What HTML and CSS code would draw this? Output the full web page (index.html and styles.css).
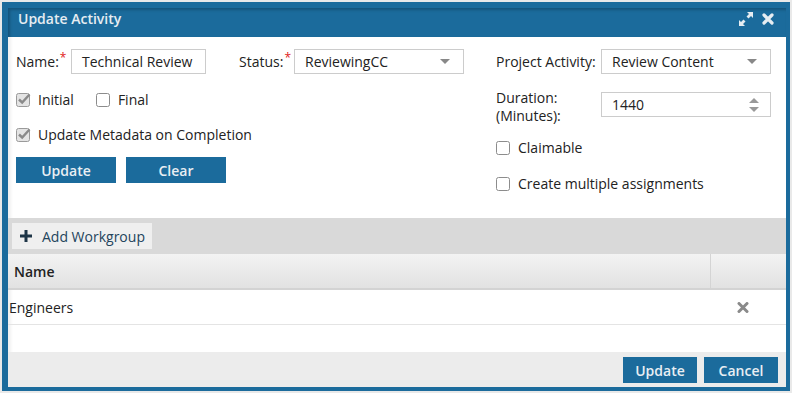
FILE: index.html
```html
<!DOCTYPE html>
<html lang="en">
<head>
    <meta charset="UTF-8">
    <title>Update Activity</title>
    <link rel="stylesheet" href="styles.css">
</head>
<body>
    <div class="dialog">
        <div class="title-bar">
            <span class="title">Update Activity</span>
            <div class="title-icons">
                <svg class="icon-max" width="14" height="14" viewBox="0 0 14 14">
                    <polygon points="14,0 14,6 12,4 9.5,6.5 7.5,4.5 10,2 8,0" fill="#e6edf2"/>
                    <polygon points="0,14 0,8 2,10 4.5,7.5 6.5,9.5 4,12 6,14" fill="#e6edf2"/>
                </svg>
                <svg class="icon-close" width="12" height="12" viewBox="0 0 12 12">
                    <path d="M2 2 L10 10 M10 2 L2 10" stroke="#e6edf2" stroke-width="3.2" stroke-linecap="round"/>
                </svg>
            </div>
        </div>

        <div class="form">
            <div class="col-left">
                <div class="row">
                    <label class="lbl lbl-name">Name:<span class="req">*</span></label>
                    <div class="field field-name">Technical Review</div>
                    <label class="lbl lbl-status">Status:<span class="req">*</span></label>
                    <div class="field field-select">
                        <span>ReviewingCC</span>
                        <svg width="10" height="5" viewBox="0 0 10 5"><polygon points="0,0 10,0 5,5" fill="#888"/></svg>
                    </div>
                </div>
                <div class="row row-check">
                    <span class="check">
                        <svg width="16" height="15" viewBox="0 0 16 15">
                            <rect x="0.5" y="1.5" width="13" height="13" rx="2" fill="#e4e4e4" stroke="#9a9a9a"/>
                            <path d="M3 7.5 L6.2 10.5 L13.5 2.5" fill="none" stroke="#8a8a8a" stroke-width="2.4"/>
                        </svg>
                        Initial
                    </span>
                    <span class="check check-final">
                        <svg width="16" height="15" viewBox="0 0 16 15">
                            <rect x="0.5" y="1.5" width="13" height="13" rx="2" fill="#fff" stroke="#8c8c8c"/>
                        </svg>
                        Final
                    </span>
                </div>
                <div class="row row-check">
                    <span class="check">
                        <svg width="16" height="15" viewBox="0 0 16 15">
                            <rect x="0.5" y="1.5" width="13" height="13" rx="2" fill="#e4e4e4" stroke="#9a9a9a"/>
                            <path d="M3 7.5 L6.2 10.5 L13.5 2.5" fill="none" stroke="#8a8a8a" stroke-width="2.4"/>
                        </svg>
                        Update Metadata on Completion
                    </span>
                </div>
                <div class="row row-buttons">
                    <button class="btn btn-wide">Update</button>
                    <button class="btn btn-wide">Clear</button>
                </div>
            </div>

            <div class="col-right">
                <div class="row">
                    <label class="lbl lbl-right">Project Activity:</label>
                    <div class="field field-select">
                        <span>Review Content</span>
                        <svg width="10" height="5" viewBox="0 0 10 5"><polygon points="0,0 10,0 5,5" fill="#888"/></svg>
                    </div>
                </div>
                <div class="row row-duration">
                    <label class="lbl lbl-right lbl-two">Duration:<br>(Minutes):</label>
                    <div class="field field-select field-num">
                        <span>1440</span>
                        <svg width="10" height="14" viewBox="0 0 10 14">
                            <polygon points="0,5 10,5 5,0" fill="#999"/>
                            <polygon points="0,9 10,9 5,14" fill="#999"/>
                        </svg>
                    </div>
                </div>
                <div class="row row-check row-claim">
                    <span class="check">
                        <svg width="16" height="15" viewBox="0 0 16 15">
                            <rect x="0.5" y="1.5" width="13" height="13" rx="2" fill="#fff" stroke="#8c8c8c"/>
                        </svg>
                        Claimable
                    </span>
                </div>
                <div class="row row-check row-multi">
                    <span class="check">
                        <svg width="16" height="15" viewBox="0 0 16 15">
                            <rect x="0.5" y="1.5" width="13" height="13" rx="2" fill="#fff" stroke="#8c8c8c"/>
                        </svg>
                        Create multiple assignments
                    </span>
                </div>
            </div>
        </div>

        <div class="toolbar">
            <button class="add-btn">
                <svg width="12" height="12" viewBox="0 0 12 12">
                    <path d="M6 0 V12 M0 6 H12" stroke="#1e3547" stroke-width="3"/>
                </svg>
                Add Workgroup
            </button>
        </div>

        <div class="grid">
            <div class="grid-head">
                <div class="cell-name head-name">Name</div>
                <div class="cell-action"></div>
            </div>
            <div class="grid-row">
                <div class="cell-name">Engineers</div>
                <div class="cell-action">
                    <svg width="12" height="11" viewBox="0 0 12 11">
                        <path d="M2 1.5 L10 9.5 M10 1.5 L2 9.5" stroke="#8a8a8a" stroke-width="3" stroke-linecap="round"/>
                    </svg>
                </div>
            </div>
        </div>

        <div class="footer">
            <button class="btn btn-foot">Update</button>
            <button class="btn btn-foot">Cancel</button>
        </div>
    </div>
</body>
</html>
```

FILE: styles.css
```css
body {
    margin: 0;
    background: #e9e9e9;
    font-family: 'Open Sans', sans-serif;
    font-size: 14px;
    color: #222;
}
.dialog {
    margin: 2px 0 0 2px;
    width: 778px;
    border-style: solid;
    border-color: #1b6b9c;
    border-width: 6px 4px 4px 6px;
    background: #fff;
    box-shadow: inset 3px 0 3px rgba(0, 0, 0, 0.06);
}
/* Title */
.title-bar {
    height: 29px;
    box-sizing: border-box;
    background: #1b6b9c;
    box-shadow: inset 2px 2px 3px rgba(0, 0, 0, 0.22);
    display: flex;
    justify-content: space-between;
    align-items: flex-start;
    padding: 1px 12px 0 10px;
}
.title {
    font-weight: 600;
    line-height: 20px;
    color: #e6edf2;
}
.title-icons {
    display: flex;
    gap: 9px;
    padding-top: 3px;
}
.icon-close {
    margin-top: 1px;
}
/* Form */
.form {
    height: 181px;
    box-sizing: border-box;
    padding: 12px 15px 0 8px;
    display: flex;
    justify-content: space-between;
}
.col-left, .col-right {
    display: flex;
    flex-direction: column;
}
.col-right {
    width: 275px;
}
.row {
    display: flex;
    align-items: center;
}
.lbl {
    line-height: 25px;
    height: 25px;
    white-space: nowrap;
}
.lbl-name {
    width: 55px;
}
.lbl-status {
    width: 55px;
    margin-left: 33px;
}
.lbl-right {
    width: 105px;
}
.lbl-two {
    height: auto;
    line-height: 18px;
    margin-top: -3px;
}
.req {
    color: #e02020;
    font-size: 12px;
    position: relative;
    top: -5px;
    margin-left: 1px;
}
.field {
    height: 25px;
    box-sizing: border-box;
    border: 1px solid #cccccc;
    padding: 0 10px;
    line-height: 23px;
    white-space: nowrap;
}
.field-name {
    width: 135px;
}
.field-select {
    width: 170px;
    display: flex;
    justify-content: space-between;
    align-items: center;
    padding-right: 13px;
}
.field-num {
    padding-right: 11px;
}
.row-check {
    height: 20px;
    margin-top: 15px;
}
.check {
    display: flex;
    align-items: center;
    gap: 6px;
}
.check-final {
    margin-left: 22px;
}
.row-buttons {
    margin-top: 13px;
    gap: 10px;
}
.btn {
    border: none;
    background: #1b6b9c;
    color: #e8eef3;
    font-family: 'Open Sans', sans-serif;
    font-size: 14px;
    font-weight: 600;
    padding: 0;
    cursor: pointer;
}
.btn-wide {
    width: 100px;
    height: 26px;
}
.row-duration {
    margin-top: 18px;
    align-items: flex-start;
}
.row-claim {
    margin-top: 12px;
}
.row-multi {
    margin-top: 16px;
}
/* Toolbar */
.toolbar {
    height: 36px;
    box-sizing: border-box;
    background: #d9d9d9;
    padding: 5px 4px;
}
.add-btn {
    width: 140px;
    height: 26px;
    border: none;
    background: #efefef;
    color: #23445c;
    font-family: 'Open Sans', sans-serif;
    font-size: 14px;
    display: flex;
    align-items: center;
    gap: 10px;
    padding: 0 0 0 8px;
}
/* Grid */
.grid-head {
    height: 36px;
    box-sizing: border-box;
    display: flex;
    background: linear-gradient(#f3f3f3, #e2e2e2);
    border-bottom: 2px solid #d3d3d3;
}
.grid-head .cell-action {
    border-left: 1px solid #d4d4d4;
}
.cell-name {
    flex: 1;
    display: flex;
    align-items: center;
    padding-left: 1px;
}
.head-name {
    padding-left: 6px;
    font-weight: 600;
}
.cell-action {
    width: 75px;
    display: flex;
    align-items: center;
    justify-content: center;
}
.grid-row {
    height: 35px;
    box-sizing: border-box;
    display: flex;
    border-bottom: 1px solid #e4e4e4;
    margin-bottom: 27px;
}
.grid-row .cell-action {
    padding-right: 6px;
}
/* Footer */
.footer {
    height: 35px;
    box-sizing: border-box;
    background: #ececec;
    display: flex;
    justify-content: flex-end;
    align-items: flex-start;
    gap: 7px;
    padding: 5px 8px 0 0;
}
.btn-foot {
    width: 74px;
    height: 26px;
}
```
